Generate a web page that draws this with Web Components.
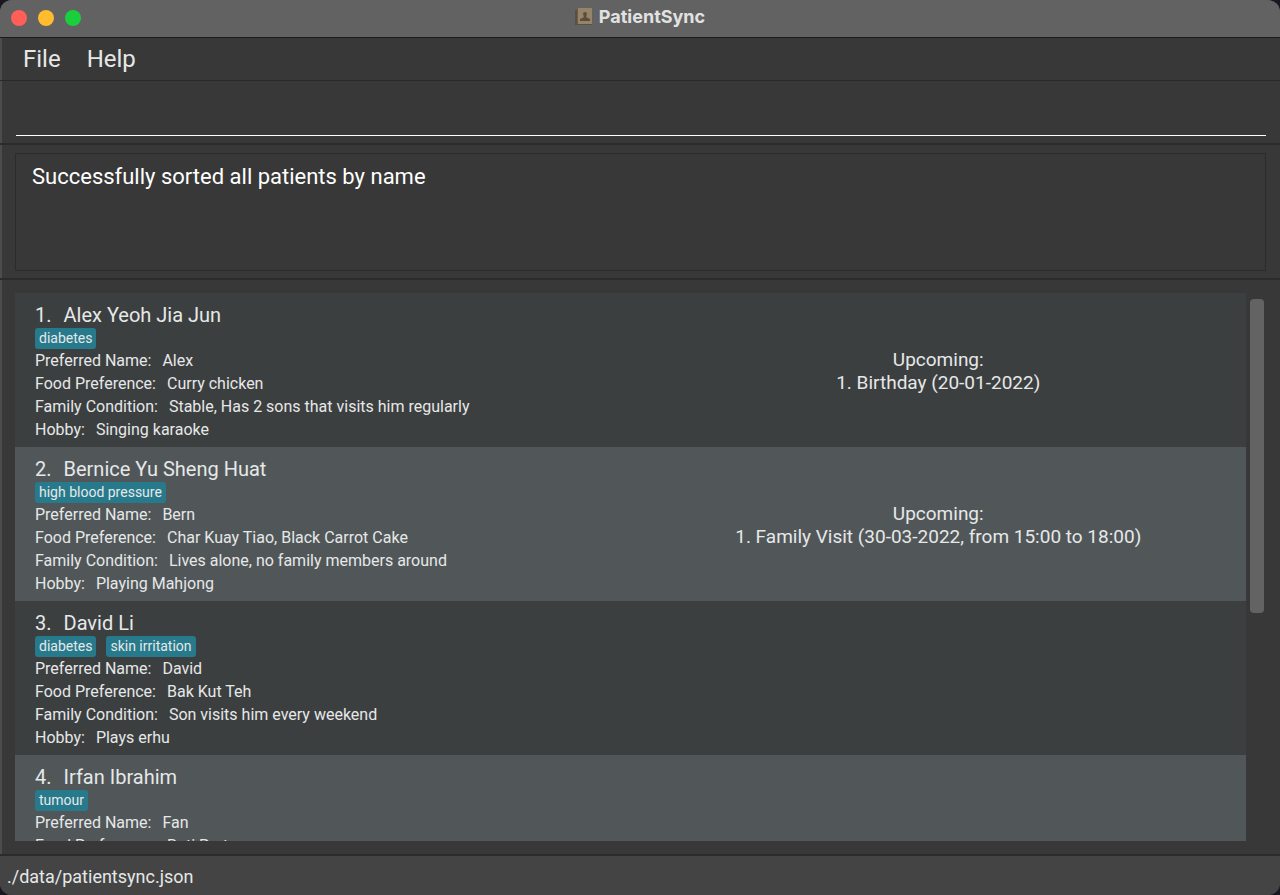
<!DOCTYPE html>
<html lang="en">
<head>
<meta charset="utf-8">
<title>PatientSync</title>
<style>
html, body { margin: 0; height: 100%; background: #1b1720; }
body { font-family: Roboto, "Liberation Sans", sans-serif; color: #e6e8e8; }
</style>
</head>
<body>
<app-window>
  <title-bar slot="title">PatientSync</title-bar>
  <menu-bar slot="menu"><menu-item>File</menu-item><menu-item>Help</menu-item></menu-bar>
  <command-box slot="command"></command-box>
  <result-display slot="result" text="Successfully sorted all patients by name"></result-display>
  <patient-list slot="list">
    <patient-card index="1." name="Alex Yeoh Jia Jun">
      <condition-tag slot="tags">diabetes</condition-tag>
      <patient-field label="Preferred Name:">Alex</patient-field>
      <patient-field label="Food Preference:">Curry chicken</patient-field>
      <patient-field label="Family Condition:">Stable, Has 2 sons that visits him regularly</patient-field>
      <patient-field label="Hobby:">Singing karaoke</patient-field>
      <upcoming-events slot="upcoming">1. Birthday (20-01-2022)</upcoming-events>
    </patient-card>
    <patient-card index="2." name="Bernice Yu Sheng Huat">
      <condition-tag slot="tags">high blood pressure</condition-tag>
      <patient-field label="Preferred Name:">Bern</patient-field>
      <patient-field label="Food Preference:">Char Kuay Tiao, Black Carrot Cake</patient-field>
      <patient-field label="Family Condition:">Lives alone, no family members around</patient-field>
      <patient-field label="Hobby:">Playing Mahjong</patient-field>
      <upcoming-events slot="upcoming">1. Family Visit (30-03-2022, from 15:00 to 18:00)</upcoming-events>
    </patient-card>
    <patient-card index="3." name="David Li">
      <condition-tag slot="tags">diabetes</condition-tag>
      <condition-tag slot="tags">skin irritation</condition-tag>
      <patient-field label="Preferred Name:">David</patient-field>
      <patient-field label="Food Preference:">Bak Kut Teh</patient-field>
      <patient-field label="Family Condition:">Son visits him every weekend</patient-field>
      <patient-field label="Hobby:">Plays erhu</patient-field>
    </patient-card>
    <patient-card index="4." name="Irfan Ibrahim">
      <condition-tag slot="tags">tumour</condition-tag>
      <patient-field label="Preferred Name:">Fan</patient-field>
      <patient-field label="Food Preference:">Roti Prata</patient-field>
    </patient-card>
  </patient-list>
  <status-bar slot="status">./data/patientsync.json</status-bar>
</app-window>

<script>
const define = (name, html, setup) => {
  const template = document.createElement('template');
  template.innerHTML = html;
  customElements.define(name, class extends HTMLElement {
    constructor() {
      super();
      this.attachShadow({ mode: 'open' }).append(template.content.cloneNode(true));
    }
    connectedCallback() { if (setup) setup(this, this.shadowRoot); }
  });
};

define('app-window', `
<style>
:host { display: flex; flex-direction: column; box-sizing: border-box; height: 100vh; overflow: hidden;
  background: #383838; border-radius: 12px; box-shadow: inset 2px 0 #4c4c4c; }
.list { flex: 1; min-height: 0; display: flex; flex-direction: column; padding: 13px 15px; }
.result { padding: 8px 14px 7px 15px; }
section { border-bottom: 2px solid #2b2b2b; }
</style>
<slot name="title"></slot>
<slot name="menu"></slot>
<section><slot name="command"></slot></section>
<section class="result"><slot name="result"></slot></section>
<section class="list"><slot name="list"></slot></section>
<slot name="status"></slot>`);

define('title-bar', `
<style>
:host { display: grid; grid-template-columns: 1fr auto 1fr; align-items: center; height: 38px; flex: none;
  box-sizing: border-box; background: #626262; border-bottom: 1px solid #1c1c1c; padding: 0 11px; }
.lights { display: flex; gap: 11px; padding-bottom: 2px; }
.lights button { width: 16px; height: 16px; border: 0; border-radius: 50%; padding: 0; }
.close { background: #ff5f57; } .min { background: #febc2e; } .max { background: #19d03c; }
h1 { display: flex; align-items: center; gap: 7px; margin: 0; font: 700 18px/24px Inter, sans-serif; color: #e2e2e2; padding-bottom: 3px; }
svg { display: block; }
</style>
<div class="lights">
  <button class="close" aria-label="Close"></button>
  <button class="min" aria-label="Minimize"></button>
  <button class="max" aria-label="Zoom"></button>
</div>
<h1>
  <svg width="17" height="18" viewBox="0 0 17 18" aria-hidden="true">
    <path d="M0 2h2V0h15v16l-1 1H0z" fill="#55504a"/>
    <path d="M3 0h14v16H3z" fill="#958469"/>
    <path d="M2 0h1v16H2z" fill="#715b40"/>
    <circle cx="10" cy="6" r="2" fill="#5a4d3d"/>
    <path d="M9 7h2l.5 2.500 3.500 1.500v2H5v-2l3.500-1.500z" fill="#5a4d3d"/>
  </svg>
  <slot></slot>
</h1>`);

define('menu-bar', `
<style>
:host { display: block; flex: none; border-bottom: 1px solid #292929; }
nav { display: flex; gap: 26px; height: 42px; align-items: center; padding: 0 23px; }
</style>
<nav><slot></slot></nav>`);

define('menu-item', `
<style>
:host { display: block; }
button { border: 0; padding: 0; background: none; color: inherit; font: 400 24px/30px Roboto, sans-serif; display: block; }
</style>
<button type="button"><slot></slot></button>`);

define('command-box', `
<style>
:host { display: block; padding: 14px 14px 7px 16px; }
input { display: block; box-sizing: border-box; width: 100%; height: 41px; border: 0; border-bottom: 1px solid #fff;
  background: none; padding: 0; outline: 0; color: #fff; font: 400 22px/30px Roboto, sans-serif; border-radius: 0; }
</style>
<input type="text" aria-label="Command">`);

define('result-display', `
<style>
:host { display: block; }
textarea { display: block; box-sizing: border-box; width: 100%; height: 118px; resize: none; margin: 0; outline: 0;
  background: none; border: 1px solid #2c2c2c; padding: 8px 16px; color: #fff; font: 400 22px/30px Roboto, sans-serif; }
</style>
<textarea readonly aria-label="Result"></textarea>`, (host, root) => {
  root.querySelector('textarea').value = host.getAttribute('text');
});

define('patient-list', `
<style>
:host { display: flex; flex: 1; min-height: 0; gap: 4px; }
.rows { flex: 1; min-width: 0; overflow: hidden; }
.track { width: 14px; padding-top: 6px; box-sizing: border-box; flex: none; margin-right: 1px; }
.thumb { height: 58%; border-radius: 4px; background: #636363; }
::slotted(patient-card:nth-child(odd)) { background: #3c3f40; }
::slotted(patient-card:nth-child(even)) { background: #515759; }
</style>
<div class="rows"><slot></slot></div>
<div class="track"><div class="thumb"></div></div>`);

define('patient-card', `
<style>
:host { display: grid; grid-template-columns: 1fr 1fr; align-items: center; box-sizing: border-box; min-height: 154px; padding: 9px 0 6px; }
.info { padding-left: 20px; align-self: start; }
h2 { display: flex; gap: 12px; margin: 0; font-size: 20px; line-height: 26px; font-weight: 400; }
.tags { display: flex; gap: 10px; }
</style>
<div class="info">
  <h2><span class="index"></span><span class="name"></span></h2>
  <div class="tags"><slot name="tags"></slot></div>
  <slot></slot>
</div>
<slot name="upcoming"></slot>`, (host, root) => {
  root.querySelector('.index').textContent = host.getAttribute('index');
  root.querySelector('.name').textContent = host.getAttribute('name');
});

define('condition-tag', `
<style>
:host { display: block; background: #277a8c; border-radius: 3px; padding: 0 4px; font-size: 14px; line-height: 21px; }
</style>
<slot></slot>`);

define('patient-field', `
<style>
:host { display: flex; gap: 11px; font-size: 16px; line-height: 23px; white-space: nowrap; }
</style>
<span class="label"></span><span><slot></slot></span>`, (host, root) => {
  root.querySelector('.label').textContent = host.getAttribute('label');
});

define('upcoming-events', `
<style>
:host { display: block; text-align: center; font-size: 19px; line-height: 23px; padding-bottom: 2px; }
</style>
<div>Upcoming:</div>
<div><slot></slot></div>`);

define('status-bar', `
<style>
:host { display: block; flex: none; background: #444; padding: 6px 7px 3px; font-size: 18px; line-height: 30px; }
</style>
<slot></slot>`);
</script>
</body>
</html>
